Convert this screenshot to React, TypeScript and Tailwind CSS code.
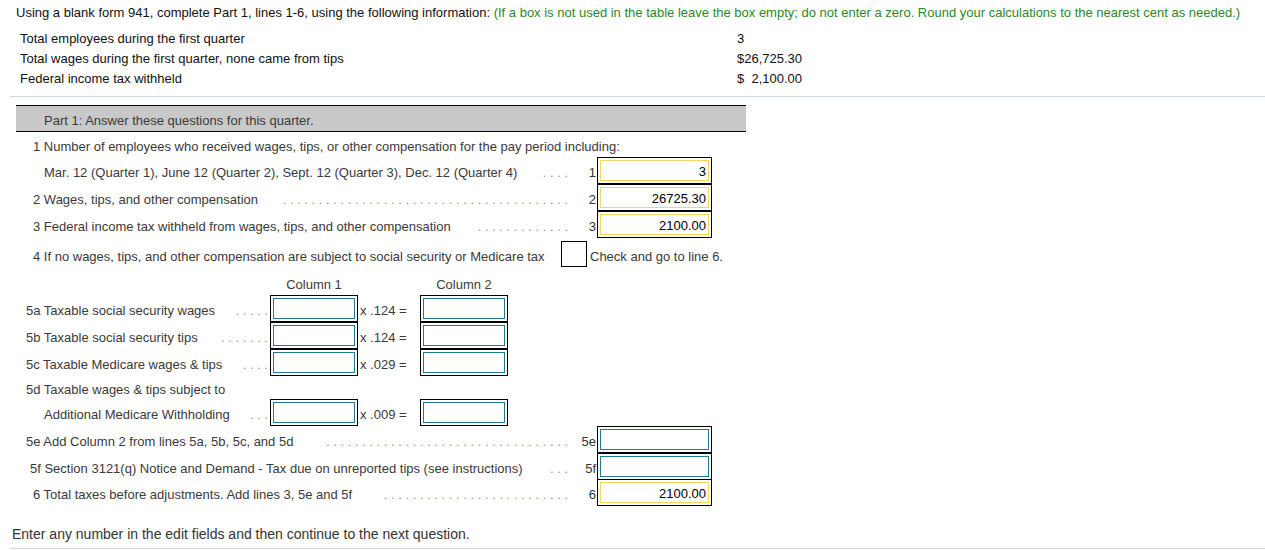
import type { ReactNode } from "react";

function makeDots(count: number) {
  return Array(count).fill(".").join(" ");
}

type RowProps = {
  indent: string;
  text?: string;
  dots?: number;
  num?: string;
  height: string;
  width?: string;
  children?: ReactNode;
};

function LineRow({
  indent,
  text,
  dots = 0,
  num = "",
  height,
  width = "w-[568px]",
  children,
}: RowProps) {
  return (
    <div className={`flex ${height}`}>
      <div className={`flex ${width} items-center pt-[4px] ${indent}`}>
        {text && (
          <span className="whitespace-nowrap">
            {text}
          </span>
        )}

        {dots > 0 && (
          <div className="flex flex-1 justify-end whitespace-nowrap text-[#a89272]">
            {makeDots(dots)}
          </div>
        )}
      </div>

      {num !== "" && (
        <div className="w-[29px] pt-[4px] flex items-center justify-end pr-[1px] text-[#333]">
          {num}
        </div>
      )}

      {children}
    </div>
  );
}

function AnswerBox({
  value,
  filled,
  width = "w-[115px]",
}: {
  value?: string;
  filled?: boolean;
  width?: string;
}) {
  const inner = filled
    ? "border-[#f7d55e]"
    : "border-[#1f7b8e]";

  return (
    <div className={`h-[27px] ${width} border border-black p-[2px] bg-white`}>
      <div className={`h-full w-full border ${inner} flex items-center justify-end pr-[2px] pt-[1px] text-black`}>
        {value}
      </div>
    </div>
  );
}

function ColumnRow({
  indent,
  text,
  dots,
  factor,
}: {
  indent: string;
  text: string;
  dots: number;
  factor: string;
}) {
  return (
    <LineRow
      indent={indent}
      text={text}
      dots={dots}
      height="h-[27px]"
      width="w-[270px] pr-[2px]"
    >
      <AnswerBox width="w-[88px]" />

      <div className="w-[62px] pl-[2px] pt-[4px] flex items-center whitespace-nowrap">
        {factor}
      </div>

      <AnswerBox width="w-[88px]" />
    </LineRow>
  );
}

export default function App() {
  return (
    <div
      className="w-[1265px] h-[550px] overflow-hidden bg-white text-[13px] leading-[15px] text-[#3a3a3a]"
      style={{ fontFamily: '"Liberation Sans", Arial, sans-serif' }}
    >
      <div className="pt-[5px] pl-[16px] h-[20px] whitespace-nowrap text-[#111]">
        Using a blank form 941, complete Part 1, lines 1-6, using the following information:{" "}
        <span className="text-[#2a8a22]">
          (If a box is not used in the table leave the box empty; do not enter a zero. Round your calculations to the nearest cent as needed.)
        </span>
      </div>

      <div className="mt-[8px] pl-[20px] text-[#111]">
        {[
          ["Total employees during the first quarter", "3"],
          ["Total wages during the first quarter, none came from tips", "$26,725.30"],
          ["Federal income tax withheld", "$  2,100.00"],
        ].map(
          ([label, value]) => (
            <div
              key={label}
              className="flex h-[20px] items-center"
            >
              <span className="w-[717px]">
                {label}
              </span>

              <span className="whitespace-pre">
                {value}
              </span>
            </div>
          )
        )}
      </div>

      <div className="mt-[8px] ml-[10px] border-t border-[#cdd4de]" />

      <div className="mt-[8px] ml-[16px] w-[730px] h-[27px] border-y border-black bg-[#c9c9c9] pl-[28px] pt-[3px] flex items-center text-[#3a3a3a]">
        Part 1: Answer these questions for this quarter.
      </div>

      <LineRow
        indent="pl-[33px]"
        text="1 Number of employees who received wages, tips, or other compensation for the pay period including:"
        height="h-[25px]"
        width="w-[700px]"
      />

      <LineRow
        indent="pl-[44px]"
        text="Mar. 12 (Quarter 1), June 12 (Quarter 2), Sept. 12 (Quarter 3), Dec. 12 (Quarter 4)"
        dots={4}
        num="1"
        height="h-[27px]"
      >
        <AnswerBox value="3" filled />
      </LineRow>

      <LineRow
        indent="pl-[33px]"
        text="2 Wages, tips, and other compensation"
        dots={40}
        num="2"
        height="h-[27px]"
      >
        <AnswerBox value="26725.30" filled />
      </LineRow>

      <LineRow
        indent="pl-[33px]"
        text="3 Federal income tax withheld from wages, tips, and other compensation"
        dots={13}
        num="3"
        height="h-[27px]"
      >
        <AnswerBox value="2100.00" filled />
      </LineRow>

      <div className="flex h-[32px] items-center">
        <div className="w-[561px] pl-[33px] pt-[5px] whitespace-nowrap">
          4 If no wages, tips, and other compensation are subject to social security or Medicare tax
        </div>

        <div className="h-[26px] w-[26px] border border-black" />

        <div className="pl-[3px] pt-[5px]">
          Check and go to line 6.
        </div>
      </div>

      <div className="flex h-[25px] items-center pt-[4px]">
        <div className="w-[270px]" />

        <div className="w-[88px] text-center">
          Column 1
        </div>

        <div className="w-[62px]" />

        <div className="w-[88px] text-center">
          Column 2
        </div>
      </div>

      <ColumnRow
        indent="pl-[26px]"
        text="5a Taxable social security wages"
        dots={5}
        factor="x .124 ="
      />

      <ColumnRow
        indent="pl-[26px]"
        text="5b Taxable social security tips"
        dots={7}
        factor="x .124 ="
      />

      <ColumnRow
        indent="pl-[26px]"
        text="5c Taxable Medicare wages & tips"
        dots={4}
        factor="x .029 ="
      />

      <LineRow
        indent="pl-[26px]"
        text="5d Taxable wages & tips subject to"
        height="h-[23px]"
      />

      <ColumnRow
        indent="pl-[44px]"
        text="Additional Medicare Withholding"
        dots={3}
        factor="x .009 ="
      />

      <LineRow
        indent="pl-[26px]"
        text="5e Add Column 2 from lines 5a, 5b, 5c, and 5d"
        dots={34}
        num="5e"
        height="h-[27px]"
      >
        <AnswerBox />
      </LineRow>

      <LineRow
        indent="pl-[30px]"
        text="5f Section 3121(q) Notice and Demand - Tax due on unreported tips (see instructions)"
        dots={3}
        num="5f"
        height="h-[26px]"
      >
        <AnswerBox />
      </LineRow>

      <LineRow
        indent="pl-[33px]"
        text="6 Total taxes before adjustments. Add lines 3, 5e and 5f"
        dots={26}
        num="6"
        height="h-[27px]"
      >
        <AnswerBox value="2100.00" filled />
      </LineRow>

      <div className="mt-[19px] pl-[12px] h-[18px] text-[14px] leading-[18px] text-[#333]">
        Enter any number in the edit fields and then continue to the next question.
      </div>

      <div className="mt-[5px] ml-[10px] border-t border-[#cdd4de]" />
    </div>
  );
}
